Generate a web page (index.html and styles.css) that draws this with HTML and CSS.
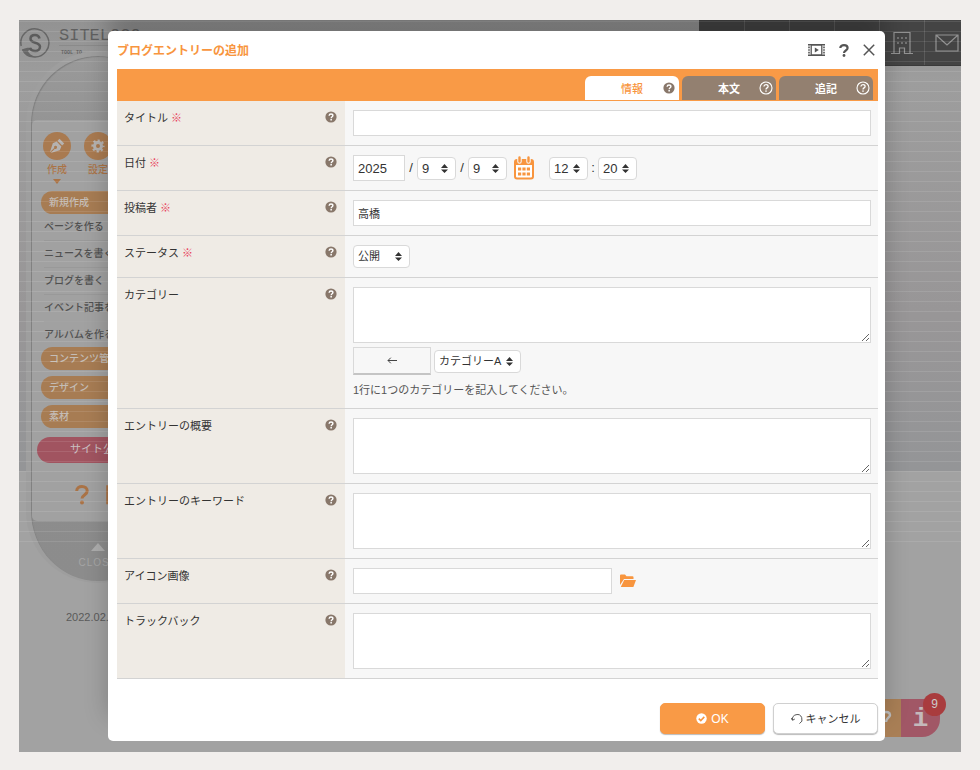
FILE: index.html
```html
<!DOCTYPE html>
<html lang="ja">
<head>
<meta charset="utf-8">
<title>ブログエントリーの追加</title>
<link rel="stylesheet" href="styles.css">
</head>
<body>
<svg class="defs" aria-hidden="true">
  <symbol id="help" viewBox="0 0 12 12">
    <circle cx="6" cy="6" r="5.6" fill="#88776a"/>
    <path d="M4.1 4.7C4.2 3.5 5 3 6 3c1.100 0 1.900.6 1.900 1.600C7.900 5.800 6.200 5.800 6.200 7.200" fill="none" stroke="#fff" stroke-width="1.400"/>
    <rect x="5.400" y="8" width="1.500" height="1.500" fill="#fff"/>
  </symbol>
  <symbol id="help-line" viewBox="0 0 14 14">
    <circle cx="7" cy="7" r="6" fill="none" stroke="#fff" stroke-width="1.100"/>
    <path d="M4.900 5.500C5 4.200 5.900 3.600 7 3.600c1.200 0 2.100.7 2.100 1.800C9.100 6.900 7 6.900 7 8.500" fill="none" stroke="#fff" stroke-width="1.300"/>
    <rect x="6.300" y="9.400" width="1.400" height="1.400" fill="#fff"/>
  </symbol>
</svg>
<div class="app">
  <div class="backdrop">
    <div class="hero-shade"></div>
    <div class="brand">
      <svg class="brand-mark" viewBox="0 0 32 32"><path d="M2.200 19A14 14 0 1 1 3.500 22.500" fill="none" stroke="#666" stroke-width="1.500"/><path d="M3 22.500c3 7.500 9 8.500 14 7.500-5-1.500-7-3.500-8-6l3.500-3c-3.500-.5-6 0-9.500 1.500z" fill="#666"/><path d="M20.500 11.500c-.5-2.500-2.300-3.500-4.500-3.500-2.600 0-4.500 1.500-4.500 3.800 0 5.200 9.500 2.700 9.500 8 0 2.400-2 4.200-4.800 4.200-2.500 0-4.500-1.200-5.200-3" fill="none" stroke="#5c5c5c" stroke-width="2.500"/></svg>
      <div class="brand-text">
        <span class="brand-name">SITELOGO</span>
        <span class="brand-tag">TOOL TO</span>
      </div>
    </div>
    <nav class="topnav">
      <span></span>
      <span><svg width="24" height="30" viewBox="0 0 24 30"><path d="M1 30V12q0-3 3-3h18v3H5" fill="none" stroke="#929292"/></svg></span>
      <span></span>
      <span></span>
      <span><svg width="22" height="24" viewBox="0 0 22 24" fill="none" stroke="#929292" stroke-width="1.200"><path d="M3 22.500V1.500h16v21M0 22.500h8.500V17h5v5.500H22"/><path d="M7 6v2M11 6v2M15 6v2M7 11v2M11 11v2M15 11v2"/></svg></span>
      <span><svg width="24" height="18" viewBox="0 0 24 18" fill="none" stroke="#929292" stroke-width="1.200"><path d="M1 1h22v16H1zM1 1l11 10L23 1"/></svg></span>
    </nav>
    <div class="side">
      <div class="side-body">
        <div class="card">
          <div class="modes">
            <div class="mode"><span class="round"><svg width="16" height="16" viewBox="0 0 16 16"><path d="M10.500.8l4.700 4.700-2 2-4.700-4.700z" fill="#b5b2b0"/><path d="M7.600 3.600l4.800 4.800-1.600 3.800L1.600 15l4.300-4.300a1.500 1.500 0 1 0-.7-.7L.9 14.300 3.800 5.200z" fill="#b5b2b0"/></svg></span>作成<i class="caret"></i></div>
            <div class="mode"><span class="round"><svg width="14" height="14" viewBox="0 0 14 14"><circle cx="7" cy="7" r="5.500" fill="none" stroke="#b5b2b0" stroke-width="2.200" stroke-dasharray="2.160" stroke-dashoffset="1.080"/><circle cx="7" cy="7" r="3.500" fill="none" stroke="#b5b2b0" stroke-width="3"/></svg></span>設定</div>
          </div>
          <div class="pill">新規作成</div>
          <ul class="links">
            <li>ページを作る</li><li>ニュースを書く</li><li>ブログを書く</li><li>イベント記事を書く</li><li>アルバムを作る</li>
          </ul>
          <div class="pills">
            <div class="pill">コンテンツ管理</div>
            <div class="pill">デザイン</div>
            <div class="pill">素材</div>
          </div>
          <div class="publish">サイト公開</div>
          <div class="side-tools"><svg width="14" height="20" viewBox="0 0 14 20"><path d="M1.700 6C1.700 3.200 4 1.600 7 1.600s5.200 1.700 5.200 4.300c0 4-5.200 4-5.200 7.600" fill="none" stroke="#aa7346" stroke-width="3"/><circle cx="7" cy="17.400" r="2" fill="#aa7346"/></svg><svg width="16" height="20" viewBox="0 0 16 20"><path d="M1.200 1.200h13.600v17H1.200z" fill="none" stroke="#aa7346" stroke-width="2"/></svg></div>
        </div>
        <div class="close"><svg width="14" height="8" viewBox="0 0 14 8"><path d="M7 0l7 8H0z" fill="#adadad"/></svg><span>CLOSE</span></div>
      </div>
      <div class="date">2022.02.22</div>
    </div>
    <div class="stripes"></div>
    <div class="dock"><span class="dock-help"><svg width="10" height="16" viewBox="0 0 10 16"><path d="M0 2.500c4-1.500 7 0 7 2.500S3 8 3 12" fill="none" stroke="#bbb" stroke-width="2.500"/></svg></span><span class="dock-info">i</span><b class="badge">9</b></div>
  </div>

  <form class="modal">
    <header class="head">
      <h1>ブログエントリーの追加</h1>
      <div class="tools">
        <button type="button" aria-label="動画"><svg width="17" height="12" viewBox="0 0 17 12"><path d="M1 0v12M16 0v12" stroke="#555" stroke-width="1.600" stroke-dasharray="1.600 1"/><path d="M3.200 1v10h10.600V1zM0 .7h17M0 11.300h17" fill="none" stroke="#555" stroke-width="1.300"/><path d="M6.800 3.500L10.800 6 6.800 8.500z" fill="#555"/></svg></button>
        <button type="button" aria-label="ヘルプ"><svg width="10" height="13" viewBox="0 0 10 13"><path d="M1.300 4C1.300 2.100 2.900 1.200 5 1.200s3.600 1.100 3.600 2.800c0 2.500-3.600 2.500-3.600 5" fill="none" stroke="#555" stroke-width="2.200"/><circle cx="5" cy="11.500" r="1.400" fill="#555"/></svg></button>
        <button type="button" aria-label="閉じる"><svg width="12" height="12" viewBox="0 0 12 12"><path d="M.8.8l10.400 10.400M11.200.8L.8 11.200" stroke="#555" stroke-width="1.500"/></svg></button>
      </div>
    </header>
    <nav class="tabs">
      <button type="button" class="tab active"><span>情報</span><svg class="q"><use href="#help"/></svg></button>
      <button type="button" class="tab"><span>本文</span><svg class="q line"><use href="#help-line"/></svg></button>
      <button type="button" class="tab"><span>追記</span><svg class="q line"><use href="#help-line"/></svg></button>
    </nav>

    <div class="row">
      <div class="name"><label for="title">タイトル <em>※</em></label><svg class="q"><use href="#help"/></svg></div>
      <div class="field"><input id="title" type="text"></div>
    </div>
    <div class="row">
      <div class="name"><label for="year">日付 <em>※</em></label><svg class="q"><use href="#help"/></svg></div>
      <div class="field inline">
        <input id="year" class="year" type="text" value="2025"><span class="sep">/</span>
        <select class="num" aria-label="月"><option>9</option></select><span class="sep">/</span>
        <select class="num" aria-label="日"><option>9</option></select>
        <button type="button" class="cal" aria-label="カレンダー"><svg width="20" height="24" viewBox="0 0 20 24"><rect x="1" y="4" width="18" height="18.500" rx="2" fill="#fff" stroke="#f8953e" stroke-width="2"/><path d="M1 4h18v5H1z" fill="#f8953e"/><path d="M5.500 1.500v4M14.500 1.500v4" stroke="#f7f7f7" stroke-width="4.500" stroke-linecap="round"/><path d="M5.500 1.500v4M14.500 1.500v4" stroke="#f8953e" stroke-width="2.400" stroke-linecap="round"/><path d="M4 13h12M4 18h12" stroke="#f8953e" stroke-width="3.200" stroke-dasharray="3.200 1.200"/></svg></button>
        <select class="num" aria-label="時"><option>12</option></select><span class="sep colon">:</span>
        <select class="num" aria-label="分"><option>20</option></select>
      </div>
    </div>
    <div class="row">
      <div class="name"><label for="author">投稿者 <em>※</em></label><svg class="q"><use href="#help"/></svg></div>
      <div class="field"><input id="author" type="text" value="高橋"></div>
    </div>
    <div class="row">
      <div class="name"><label for="status">ステータス <em>※</em></label><svg class="q"><use href="#help"/></svg></div>
      <div class="field"><select id="status" class="status"><option>公開</option></select></div>
    </div>
    <div class="row">
      <div class="name"><label for="category">カテゴリー</label><svg class="q"><use href="#help"/></svg></div>
      <div class="field">
        <textarea id="category"></textarea>
        <div class="pick"><button type="button" class="insert" aria-label="追加"><svg width="10" height="7" viewBox="0 0 10 7"><path d="M10 3.500H1M3.800.7L1 3.500l2.800 2.800" fill="none" stroke="#444"/></svg></button><select class="cat" aria-label="カテゴリー選択"><option>カテゴリーA</option></select></div>
        <p class="note">1行に1つのカテゴリーを記入してください。</p>
      </div>
    </div>
    <div class="row">
      <div class="name"><label for="summary">エントリーの概要</label><svg class="q"><use href="#help"/></svg></div>
      <div class="field"><textarea id="summary"></textarea></div>
    </div>
    <div class="row">
      <div class="name"><label for="keywords">エントリーのキーワード</label><svg class="q"><use href="#help"/></svg></div>
      <div class="field"><textarea id="keywords"></textarea></div>
    </div>
    <div class="row">
      <div class="name"><label for="icon">アイコン画像</label><svg class="q"><use href="#help"/></svg></div>
      <div class="field inline"><input id="icon" class="half" type="text"><button type="button" class="folder" aria-label="ファイルを選択"><svg width="16" height="14" viewBox="0 0 16 14"><path d="M0 11V1.500Q0 .5 1 .5h4l1.500 1.700h6q1 0 1 1V5H4z" fill="#f8953e"/><path d="M.8 13L4.200 6H16l-2.600 7z" fill="#f8953e"/></svg></button></div>
    </div>
    <div class="row">
      <div class="name"><label for="trackback">トラックバック</label><svg class="q"><use href="#help"/></svg></div>
      <div class="field"><textarea id="trackback"></textarea></div>
    </div>

    <footer class="foot">
      <button type="submit" class="btn ok"><svg width="11" height="11" viewBox="0 0 11 11"><circle cx="5.500" cy="5.500" r="5.200" fill="#fff"/><path d="M2.800 5.600l2 2 3.500-3.700" fill="none" stroke="#f8953e" stroke-width="1.600"/></svg>OK</button>
      <button type="button" class="btn cancel"><svg width="12" height="12" viewBox="0 0 12 12"><path d="M1.500 7A4.800 4.800 0 1 1 8.500 10.600M0 5l1.500 2.300L3.800 6" fill="none" stroke="#555"/></svg>キャンセル</button>
    </footer>
  </form>
</div>
</body>
</html>
```
FILE: styles.css
```css
* { box-sizing: border-box; }
body {
  margin: 0;
  padding: 20px 19px 18px;
  background: #f1eeec;
  color: #333;
  font: 11px/16px "Liberation Sans", "Noto Sans CJK JP", sans-serif;
}
button, input, select, textarea { font: inherit; color: inherit; margin: 0; }
button { border: 0; padding: 0; background: none; }
svg { display: block; flex: none; }
.defs { position: absolute; width: 0; height: 0; }

.app { position: relative; overflow: hidden; padding: 11px 76px 11px 89px; background: #a2a2a2; }

/* Dimmed page behind the dialog */
.backdrop { position: absolute; inset: 0; overflow: hidden; }
.hero-shade { position: absolute; inset: 0 0 auto; height: 451px; background: linear-gradient(#929292, #9d9d9d 60px, #989697 65%, #949597); }
.stripes {
  position: absolute; inset: 0 0 auto; height: 523px;
  background: repeating-linear-gradient(transparent 0 1px, rgba(255, 255, 255, .1) 1px 2px, transparent 2px 10px);
}
.brand { position: relative; display: flex; gap: 8px; padding-top: 7px; height: 31px; }
.brand-mark { width: 32px; height: 32px; }
.brand-text { display: flex; flex-direction: column; color: #606060; }
.brand-name { font: 17px/18px "Liberation Mono", monospace; border-bottom: 1px solid #8a8a8a; }
.brand-tag { font: bold 5px/14px "Liberation Mono", monospace; padding-left: 2px; }
.topnav { position: absolute; top: 0; right: 0; width: 262px; height: 46px; padding-left: 1px; display: flex; overflow: hidden; background: #444; border-bottom: 1px solid #3a3a3a; }
.topnav span { flex: none; width: 45px; display: flex; align-items: center; justify-content: center; border-right: 1px solid #5a5a5a; }

.side { position: relative; width: 144px; margin-left: 7px; }
.side-body {
  height: 532px; padding: 64px 1px 0; border: 5px solid #9e9e9e; border-bottom-width: 2px;
  border-radius: 72px; background: linear-gradient(#999, #8e8e8e 30%, #8c8c8c);
  box-shadow: inset 1px 1px 1px #808080;
}
.card { height: 401px; padding-top: 12px; border-radius: 5px; background: #a1a1a1; overflow: hidden; }
.modes { display: flex; gap: 13px; padding-left: 11px; color: #aa7346; font-size: 10px; font-weight: 500; }
.mode { display: flex; flex-direction: column; align-items: center; height: 59px; width: 28px; line-height: 18px; }
.round { width: 28px; height: 28px; border-radius: 50%; background: #a97a50; display: flex; align-items: center; justify-content: center; margin-bottom: 1px; }
.caret { border: 4px solid transparent; border-top: 5px solid #aa7346; border-bottom: 0; }
.pill { height: 23px; margin-left: 9px; padding-left: 8px; border-radius: 12px 0 0 12px; background: #a77c53; color: #c4bdb6; font: 10px/21px "Noto Sans CJK JP", sans-serif; font-weight: 500; white-space: nowrap; }
.links { list-style: none; margin: 0; padding: 0 0 0 12px; color: #505050; font-size: 10px; font-weight: 500; line-height: 26px; white-space: nowrap; }
.links li { height: 27px; border-bottom: 1px solid #999; }
.links li:last-child { border: 0; height: 25px; }
.pills { display: grid; gap: 6px; }
.publish { height: 26px; margin: 9px 0 0 5px; padding-left: 33px; border-radius: 13px; background: #a15460; color: #c9bfc0; line-height: 25px; }
.side-tools { display: flex; gap: 17px; padding: 22px 0 0 43px; }
.close { display: flex; flex-direction: column; align-items: center; padding-top: 22px; color: #a5a5a5; font-size: 10px; letter-spacing: 1px; gap: 4px; }
.date { margin: 26px 0 0 40px; color: #5a5a5a; }
.dock { position: absolute; right: 21px; bottom: 15px; display: flex; height: 38px; }
.dock-help { width: 40px; background: #a97f56; display: flex; align-items: center; justify-content: flex-end; padding-right: 8px; }
.dock-info { width: 39px; border-radius: 0 0 18px 0; background: #a15766; color: #c4b9bb; font: bold 26px/40px "Liberation Mono", monospace; text-align: center; }
.badge { position: absolute; top: -6px; right: -6px; width: 23px; height: 23px; border-radius: 50%; background: #a93c3e; color: #ccc; font: 12px/22px "Liberation Sans", sans-serif; text-align: center; }

/* Dialog */
.modal { position: relative; padding: 0 7px 7px 9px; border-radius: 5px; background: #fff; box-shadow: 0 -24px 24px rgba(0, 0, 0, .22); }
.head { display: flex; align-items: center; justify-content: space-between; height: 38px; padding-right: 3px; }
h1 { margin: 0; font: bold 12px/18px "Noto Sans CJK JP", sans-serif; color: #f8953e; }
.tools { display: flex; align-items: center; gap: 14px; }
.tabs { display: flex; justify-content: flex-end; gap: 3px; padding: 7px 5px 1px 0; background: #f99a46; }
.tab { position: relative; width: 94px; height: 24px; border-radius: 6px 6px 0 0; background: #938070; color: #fff; font: bold 11px/24px "Noto Sans CJK JP", sans-serif; }
.tab.active { background: #fff; color: #f8953e; font-weight: 500; }
.q { width: 12px; height: 12px; }
.tab .q { position: absolute; top: 6px; right: 4px; }
.tab .line { width: 14px; height: 14px; top: 5px; right: 3px; }

.row { display: grid; grid-template-columns: 228px 1fr; border-bottom: 1px solid #d3d3d3; }
.name { display: flex; justify-content: space-between; padding: 9px 8px 0 7px; background: #efebe5; }
.name .q { margin-top: 1px; }
.name em { color: #e8425c; font-style: normal; }
.field { padding: 9px 7px 9px 8px; background: #f7f7f7; }
.inline { display: flex; align-items: center; }
input, textarea { display: block; width: 100%; border: 1px solid #d9d9d9; border-radius: 0; background: #fff; padding: 0 4px; outline: 0; }
input { height: 26px; }
textarea { height: 56px; resize: vertical; }
.year { width: 52px; font-size: 13px; }
.half { width: 259px; }
.sep { width: 12px; text-align: center; font-size: 13px; }
.colon { width: 10px; }
select {
  appearance: none; height: 23px; padding: 0 4px; border: 1px solid #d9d9d9; border-radius: 4px; line-height: 21px;
  background: #fff url("data:image/svg+xml,%3Csvg xmlns='http://www.w3.org/2000/svg' width='7' height='9'%3E%3Cpath d='M0 4l3.500-4L7 4zM0 5.500h7L3.500 9z' fill='%23333'/%3E%3C/svg%3E") no-repeat right 7px center;
}
.num { width: 39px; font-size: 13px; }
.status { display: block; width: 57px; }
.cal { margin: 0 15px 0 7px; }
.folder { margin-left: 8px; }
.pick { display: flex; align-items: center; gap: 3px; margin-top: 4px; }
.insert { width: 78px; height: 28px; display: flex; align-items: center; justify-content: center; border: 1px solid #d9d9d9; border-bottom: 2px solid #c4c4c4; background: #f7f7f7; }
.cat { width: 87px; }
.note { margin: 7px 0 1px; color: #555; }

.foot { display: flex; justify-content: flex-end; gap: 8px; padding-top: 24px; }
.btn { display: flex; align-items: center; justify-content: center; gap: 4px; width: 105px; height: 31px; border-radius: 5px; border: 1px solid #d0d0d0; box-shadow: 0 1px 1px #bbb; }
.ok { background: #f99a46; border-color: #f99a46; color: #fff; font-size: 12px; }
.cancel { background: #fff; gap: 3px; }
```
